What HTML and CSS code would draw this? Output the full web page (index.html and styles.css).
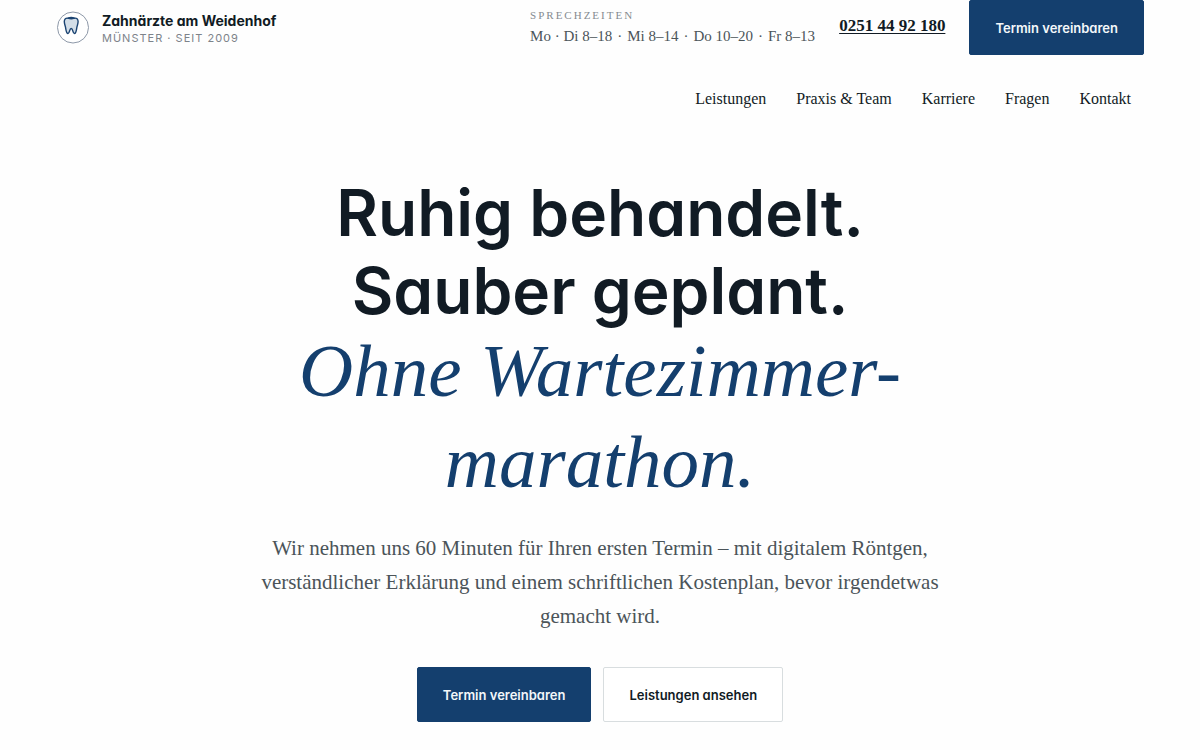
FILE: index.html
```
<!DOCTYPE html>
<html lang="de">
<head>
    <meta charset="UTF-8">
    <meta name="viewport" content="width=device-width, initial-scale=1.0">
    <title>Zahnärzte am Weidenhof - Münster</title>
    <link rel="stylesheet" href="styles.css">
</head>
<body>
    <header class="header">
        <div class="header-top">
            <a class="brand" href="#">
                <svg class="brand-icon" viewBox="0 0 34 34" aria-hidden="true">
                    <circle cx="17" cy="16.500" r="15.5" fill="#fff" stroke="#8d98a8"/>
                    <path d="M12 7.200C9.800 6.700 8.300 8 8.300 10.500c0 2.300.8 3.700 1.200 5.700.5 2.400.6 6.300 2.500 6.300 1.800 0 1.300-5 3.200-5s1.400 5 3.200 5c1.900 0 2-3.900 2.500-6.300.4-2 1.200-3.400 1.200-5.700 0-2.500-1.500-3.800-3.700-3.300-2.100.7-4.300.7-6.400 0z" fill="#d3dee8" stroke="#1c4472" stroke-width="1.400" stroke-linejoin="round"/>
                    <path d="M12 7.200c2-1 4.400-1 6.400 0" fill="none" stroke="#1c4472" stroke-width="1.400"/>
                </svg>
                <span class="brand-text">
                    <span class="brand-name">Zahnärzte am Weidenhof</span>
                    <span class="brand-sub">Münster · seit 2009</span>
                </span>
            </a>
            <div class="header-info">
                <div class="hours">
                    <span class="hours-label">Sprechzeiten</span>
                    <span class="hours-list">
                        <span>Mo · Di 8–18</span><span>·</span><span>Mi 8–14</span><span>·</span><span>Do 10–20</span><span>·</span><span>Fr 8–13</span>
                    </span>
                </div>
                <a class="phone" href="tel:+492514492180">0251 44 92 180</a>
                <button type="button" class="btn btn-primary">Termin vereinbaren</button>
            </div>
        </div>
        <nav class="nav">
            <a href="#leistungen">Leistungen</a>
            <a href="#praxis">Praxis &amp; Team</a>
            <a href="#karriere">Karriere</a>
            <a href="#fragen">Fragen</a>
            <a href="#kontakt">Kontakt</a>
        </nav>
    </header>

    <main class="hero">
        <h1>
            <span class="hero-title">Ruhig behandelt.<br>Sauber geplant.</span>
            <em class="hero-accent">Ohne Wartezimmer-<br>marathon.</em>
        </h1>
        <p class="hero-text">Wir nehmen uns 60 Minuten für Ihren ersten Termin – mit digitalem Röntgen, verständlicher Erklärung und einem schriftlichen Kostenplan, bevor irgendetwas gemacht wird.</p>
        <div class="hero-actions">
            <button type="button" class="btn btn-primary">Termin vereinbaren</button>
            <button type="button" class="btn btn-outline">Leistungen ansehen</button>
        </div>
    </main>
</body>
</html>
```
FILE: styles.css
```
* {
    box-sizing: border-box;
}

body {
    margin: 0;
    font-family: 'Liberation Serif', serif;
    background-color: #fefefe;
    color: #111b24;
}

a {
    color: inherit;
    text-decoration: none;
}

.header {
    padding: 0 56px;
}

.header-top {
    display: flex;
    justify-content: space-between;
    align-items: center;
}

.brand {
    display: flex;
    align-items: center;
    gap: 12px;
}

.brand-icon {
    width: 34px;
    height: 34px;
}

.brand-text {
    display: flex;
    flex-direction: column;
    font-family: Inter, sans-serif;
}

.brand-name {
    font-size: 14px;
    font-weight: 700;
    line-height: 20px;
    font-feature-settings: 'cv11';
}

.brand-sub {
    font-size: 11px;
    line-height: 14px;
    letter-spacing: 1px;
    text-transform: uppercase;
    color: #7d838a;
}

.header-info {
    display: flex;
    align-items: center;
    gap: 24px;
}

.hours {
    display: flex;
    flex-direction: column;
    padding-bottom: 4px;
    color: #4b5459;
}

.hours-label {
    font-size: 11px;
    line-height: 20px;
    letter-spacing: 2px;
    text-transform: uppercase;
    color: #858b90;
}

.hours-list {
    display: flex;
    gap: 5px;
    font-size: 15px;
    line-height: 22px;
}

.phone {
    padding-bottom: 4px;
    font-size: 17px;
    font-weight: bold;
    text-decoration: underline;
    text-underline-offset: 2px;
}

.btn {
    padding: 17px 25px 16px;
    border: 1px solid #d8dddf;
    border-radius: 2px;
    font-family: Inter, sans-serif;
    font-size: 13px;
    font-weight: 600;
    line-height: 20px;
    font-feature-settings: 'cv11';
    cursor: pointer;
}

.btn-primary {
    background-color: #143f6e;
    border-color: #143f6e;
    color: #f3f7fa;
}

.btn-outline {
    background-color: #fff;
    color: #111b24;
}

.nav {
    display: flex;
    justify-content: flex-end;
    gap: 30px;
    padding: 32px 13px 0 0;
    font-size: 16px;
    line-height: 24px;
}

.hero {
    padding: 63px 56px 26px;
    text-align: center;
}

h1 {
    margin: 0;
    font-weight: normal;
}

.hero-title,
.hero-accent {
    display: block;
}

.hero-title {
    font-family: Inter, sans-serif;
    font-size: 64px;
    font-weight: 600;
    line-height: 78px;
    font-feature-settings: 'cv11';
}

.hero-accent {
    margin-top: -5px;
    font-size: 75px;
    line-height: 91px;
    color: #143f6e;
}

.hero-text {
    max-width: 720px;
    margin: 24px auto 0;
    font-size: 21px;
    line-height: 34px;
    color: #4b5459;
}

.hero-actions {
    display: flex;
    justify-content: center;
    gap: 12px;
    margin-top: 34px;
}
```
